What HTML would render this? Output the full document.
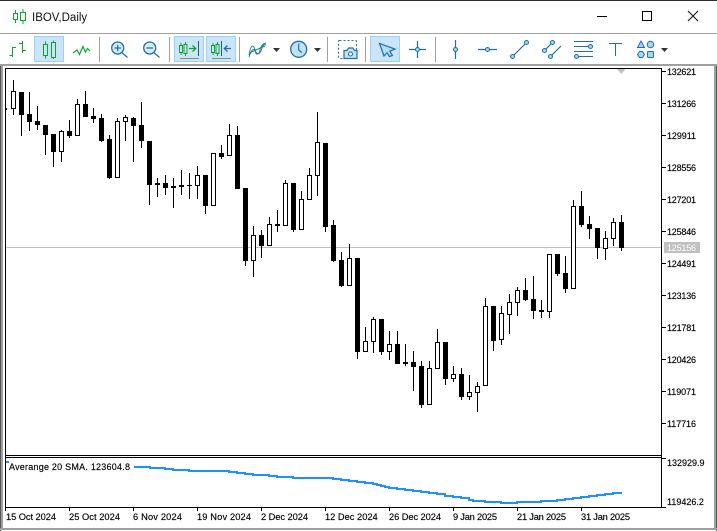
<!DOCTYPE html>
<html><head><meta charset="utf-8"><style>
html,body{margin:0;padding:0;width:717px;height:531px;overflow:hidden;background:#fff}
svg{display:block}
text{font-family:"Liberation Sans",sans-serif;font-size:9px;fill:#000;stroke:#000;stroke-width:.15px}
.d{font-size:9.3px}
.c{shape-rendering:crispEdges}
.ic{fill:none;stroke:#1f6fa8;stroke-width:1.2}
.nd{fill:#a9d4f2;stroke:#1f6fa8;stroke-width:1}
.g{fill:none;stroke:#0aa52a;stroke-width:1.2}
.sep{stroke:#a0a0a0;stroke-width:1;shape-rendering:crispEdges}
.btn{fill:#cce4f7;stroke:#99d1ff;stroke-width:1;shape-rendering:crispEdges}
</style></head><body>
<svg width="717" height="531" viewBox="0 0 717 531" xmlns="http://www.w3.org/2000/svg">
<rect width="717" height="531" fill="#fff"/>
<!-- chrome -->
<g class="c">
<rect x="0" y="0" width="717" height="1" fill="#2b2b2b"/>
<rect x="0" y="33" width="717" height="1" fill="#a0a0a0"/>
<rect x="0" y="64" width="717" height="2" fill="#a0a0a0"/>
<rect x="0" y="66" width="1" height="465" fill="#555"/>
<rect x="1" y="66" width="2" height="463" fill="#a0a0a0"/>
<rect x="714" y="66" width="2" height="463" fill="#a0a0a0"/>
<rect x="716" y="66" width="1" height="465" fill="#555"/>
<rect x="0" y="528" width="717" height="2" fill="#a0a0a0"/>
</g>
<!-- title -->
<path d="M15.5 10V23M23 9V24" stroke="#0aa52a" stroke-width="1.3" class="c"/>
<rect x="13.5" y="13.5" width="4" height="6" fill="#fff" stroke="#0aa52a" class="c"/>
<rect x="20.5" y="12.5" width="5" height="8" fill="#fff" stroke="#0aa52a" class="c"/>
<text x="32" y="21" style="font-size:11.5px;fill:#111;stroke:none">IBOV,Daily</text>
<!-- window controls -->
<path d="M597 16.5H607" stroke="#000" class="c"/>
<rect x="642.5" y="11.5" width="9" height="9" fill="none" stroke="#000" class="c"/>
<path d="M688 11L698 21M698 11L688 21" stroke="#111" stroke-width="1.1" fill="none"/>
<!-- toolbar -->
<g>
<path class="g c" d="M12.5 47V57M9.5 55.5H12.5M12.5 47.5H16M22.5 41V53M19 43.5H22.5M22.5 50.5H26"/>
<rect class="btn" x="34.5" y="36.5" width="29" height="25"/>
<path class="g c" d="M45.5 41.5V58.5M53.5 40.5V59"/>
<rect x="43.5" y="44.5" width="4" height="11" fill="#cce4f7" stroke="#0aa52a" class="c"/>
<rect x="51.5" y="42.5" width="4" height="15" fill="#cce4f7" stroke="#0aa52a" class="c"/>
<path class="g" d="M73 53L77 50L79.5 54.5L83 46.5L85.5 52L87.5 48.5L90 51"/>
<line class="sep" x1="99.5" y1="37" x2="99.5" y2="62"/>
<circle cx="117.7" cy="48" r="6" fill="#d6eafa" stroke="#1f6fa8" stroke-width="1.3"/>
<path class="ic" d="M121.8 52.5L127.5 57.5M114.5 48H121M117.7 44.8V51.2" stroke-width="1.4"/>
<circle cx="149.7" cy="48" r="6" fill="#d6eafa" stroke="#1f6fa8" stroke-width="1.3"/>
<path class="ic" d="M153.8 52.5L159.5 57.5M146.5 48H153"/>
<line class="sep" x1="169.5" y1="37" x2="169.5" y2="62"/>
<rect class="btn" x="174.5" y="36.5" width="29" height="25"/>
<path d="M181 43V55M185.5 42V56" stroke="#0aa52a" stroke-width="1.2" class="c"/>
<rect x="179.5" y="45.5" width="3" height="7" fill="#cce4f7" stroke="#0aa52a" class="c"/>
<rect x="184" y="44.5" width="3" height="9" fill="#cce4f7" stroke="#0aa52a" class="c"/>
<path d="M189 48.5H195.5M192.5 45.5L195.8 48.5L192.5 51.5" fill="none" stroke="#0aa52a" stroke-width="1.2"/>
<path d="M198.5 41V56" stroke="#1b5e93" stroke-width="1.2" class="c"/>
<path d="M180 58.5H199" stroke="#8a8a8a" class="c"/>
<rect class="btn" x="206.5" y="36.5" width="29" height="25"/>
<path d="M213 43V55M217.5 42V56" stroke="#0aa52a" stroke-width="1.2" class="c"/>
<rect x="211.5" y="45.5" width="3" height="7" fill="#cce4f7" stroke="#0aa52a" class="c"/>
<rect x="216" y="44.5" width="3" height="9" fill="#cce4f7" stroke="#0aa52a" class="c"/>
<path d="M221.5 41V56" stroke="#1b5e93" stroke-width="1.2" class="c"/>
<path d="M231 48.5H224.5M227.5 45.5L224.2 48.5L227.5 51.5" fill="none" stroke="#1f6fa8" stroke-width="1.2"/>
<path d="M212 58.5H231" stroke="#8a8a8a" class="c"/>
<line class="sep" x1="239.5" y1="37" x2="239.5" y2="62"/>
<path d="M249 55C251 43 254 45 255 50C256 56 259 55 260 50C261 45 264 43 266 43" fill="none" stroke="#1f6fa8" stroke-width=".9"/>
<path d="M249 57C252 48 254 48 256 52C258 56 261 52 262 48C263 45 264 44 266 45" fill="none" stroke="#1f6fa8" stroke-width=".9"/>
<path d="M249 53L265 46" stroke="#0aa52a" stroke-width="1.1"/>
<path d="M273 48H280L276.5 52Z" fill="#333"/>
<circle cx="298.7" cy="49.3" r="8" fill="#c3e1f7" stroke="#1f6fa8" stroke-width="1.3"/>
<path class="ic" d="M298.7 43.5V50L301.8 52.5"/>
<path d="M314 48H321L317.5 52Z" fill="#333"/>
<line class="sep" x1="327.5" y1="37" x2="327.5" y2="62"/>
<rect x="338.5" y="40.5" width="18" height="18" rx="1" fill="none" stroke="#1f6fa8" stroke-width="1.1" stroke-dasharray="2 2"/>
<path d="M344 50.5H347L348.5 48H353L354.5 50.5H357V58.5H344Z" fill="#c3e1f7" stroke="#1f6fa8" stroke-width="1.2"/>
<circle cx="350.5" cy="54" r="2" fill="#fff" stroke="#1f6fa8" stroke-width="1.1"/>
<line class="sep" x1="365.5" y1="37" x2="365.5" y2="62"/>
<rect class="btn" x="370.5" y="36.5" width="29" height="25"/>
<path d="M379.5 43.5L395 49L389.8 51.2L392.5 55.5L389.5 56.5L387 52.8L384 56Z" fill="#b5daf5" stroke="#1f6fa8" stroke-width="1.2"/>
<path class="ic" d="M409 49.5H426M417.5 41V58"/>
<circle class="nd" cx="417.5" cy="49.5" r="2"/>
<line class="sep" x1="435.5" y1="37" x2="435.5" y2="62"/>
<path class="ic" d="M455.5 40V59"/>
<circle class="nd" cx="455.5" cy="49.5" r="2"/>
<path class="ic" d="M478 49.5H497"/>
<circle class="nd" cx="487.5" cy="49.5" r="2"/>
<path class="ic" d="M512.5 56.5L526.5 42.5"/>
<circle class="nd" cx="512.5" cy="56.5" r="2"/>
<circle class="nd" cx="526.5" cy="42.5" r="2"/>
<path class="ic" d="M544.5 50.5L552.5 42.5M550.5 56.5L561 46"/>
<circle class="nd" cx="544.5" cy="50.5" r="2"/>
<circle class="nd" cx="552.5" cy="42.5" r="2"/>
<circle class="nd" cx="550.5" cy="56.5" r="2"/>
<path class="ic c" d="M574 41.5H593M574 46.5H588M574 51.5H593M578 56.5H593"/>
<circle class="nd" cx="590.5" cy="46.5" r="2"/>
<circle class="nd" cx="576.5" cy="56.5" r="2"/>
<path class="ic c" d="M609 43.5H622M615.5 43.5V56"/>
<path class="nd" d="M641 41L644.5 47.5H637.5Z"/>
<circle class="nd" cx="650.5" cy="44.5" r="3.3"/>
<path class="nd" d="M637.5 54.5L639.5 51.5H642.5L644.5 54.5L642.5 57.5H639.5Z"/>
<rect class="nd" x="647.5" y="51.5" width="6" height="6" rx="1"/>
<path d="M661 48H668L664.5 52Z" fill="#333"/>
</g>
<!-- price line -->
<rect class="c" x="6" y="247" width="655" height="1" fill="#c0c0c0"/>
<path d="M617 69H625.5L621.2 74Z" fill="#c0c0c0"/>
<!-- wicks -->
<path class="c" fill="none" stroke="#000" stroke-width="1" d="
M13.5 80V115M21.5 92V136M29.5 92V131M37.5 106V130M45.5 125V155M53.5 134V167M61.5 130V162M69.5 120V138M77.5 99V135M85.5 91V117M93.5 108V123M101.5 114V142M109.5 135V179M117.5 118V178M125.5 115V141M133.5 117V162M141.5 102V148M149.5 141V205M157.5 178V197M165.5 175V195
M173.5 178V208M181.5 170V195M189.5 173V199M197.5 166V199M205.5 175V214M213.5 153V206M221.5 145V159M229.5 124V156M237.5 126V189M245.5 188V266M253.5 226V277M261.5 230V258M269.5 217V246M277.5 210V232M285.5 180V226M293.5 183V232M301.5 191V230M309.5 168V199M317.5 112V196M325.5 143V232M333.5 220V262
M341.5 252V287M349.5 244V286M357.5 258V359M365.5 327V352M373.5 317V353M381.5 319V355M389.5 331V360M397.5 331V364M405.5 344V366M413.5 351V391M421.5 361V408M429.5 361V405M437.5 329V369M445.5 342V385M453.5 366V382M461.5 368V400M469.5 375V400M477.5 382V412M485.5 298V386M493.5 306V351M501.5 306V345M509.5 294V334
M517.5 287V316M525.5 278V301M533.5 276V319M541.5 300V318M549.5 254V318M557.5 254V276M565.5 256V293M573.5 200V289M581.5 191V227M589.5 216V239M597.5 228V259M605.5 231V260M613.5 218V246M621.5 215V251"/>
<!-- filled bodies -->
<path class="c" fill="#000" d="
M5 108h2v2h-2z
M19 92h5v23h-5zM27 114h5v8h-5zM35 121h5v4h-5zM43 125h5v10h-5zM51 134h5v18h-5zM67 131h5v5h-5zM83 104h5v13h-5zM91 116h5v3h-5zM99 118h5v23h-5zM107 139h5v39h-5zM131 118h5v8h-5zM139 125h5v16h-5zM147 141h5v44h-5zM155 183h5v2h-5zM163 183h5v5h-5z
M171 186h5v2h-5zM179 185h5v2h-5zM187 185h5v1h-5zM203 175h5v31h-5zM219 153h5v4h-5zM235 135h5v54h-5zM243 188h5v73h-5zM259 235h5v11h-5zM275 224h5v2h-5zM291 183h5v47h-5zM323 143h5v84h-5zM331 225h5v36h-5z
M339 260h5v26h-5zM355 258h5v94h-5zM379 319h5v33h-5zM395 344h5v20h-5zM403 362h5v2h-5zM411 362h5v5h-5zM419 366h5v39h-5zM443 342h5v37h-5zM459 374h5v23h-5zM491 306h5v35h-5z
M523 290h5v10h-5zM531 299h5v12h-5zM539 310h5v2h-5zM555 254h5v20h-5zM563 273h5v16h-5zM579 206h5v19h-5zM587 224h5v5h-5zM595 228h5v20h-5zM619 222h5v26h-5z"/>
<!-- hollow bodies -->
<path class="c" fill="#fff" stroke="#000" stroke-width="1" d="
M11.5 91.5h4v17h-4zM59.5 131.5h4v20h-4zM75.5 104.5h4v31h-4zM115.5 121.5h4v56h-4zM123.5 117.5h4v4h-4z
M195.5 175.5h4v10h-4zM211.5 153.5h4v52h-4zM227.5 135.5h4v20h-4zM251.5 235.5h4v25h-4zM267.5 224.5h4v21h-4zM283.5 183.5h4v42h-4zM299.5 199.5h4v30h-4zM307.5 175.5h4v24h-4zM315.5 142.5h4v33h-4z
M347.5 258.5h4v27h-4zM363.5 341.5h4v10h-4zM371.5 319.5h4v22h-4zM387.5 344.5h4v7h-4zM427.5 368.5h4v36h-4zM435.5 342.5h4v26h-4zM451.5 374.5h4v4h-4zM467.5 392.5h4v4h-4zM475.5 386.5h4v6h-4zM483.5 306.5h4v79h-4zM499.5 313.5h4v26h-4zM507.5 302.5h4v12h-4z
M515.5 290.5h4v12h-4zM547.5 254.5h4v57h-4zM571.5 206.5h4v82h-4zM603.5 238.5h4v10h-4zM611.5 222.5h4v16h-4z"/>
<!-- frames -->
<g class="c" fill="#000">
<rect x="5" y="68" width="657" height="1"/>
<rect x="5" y="455" width="657" height="1"/>
<rect x="5" y="457" width="657" height="1"/>
<rect x="5" y="507" width="657" height="1"/>
<rect x="5" y="68" width="1" height="443"/>
<rect x="661" y="68" width="1" height="440"/>
</g>
<!-- price ticks -->
<path class="c" stroke="#000" d="M662 71.5h4M662 103.5h4M662 135.5h4M662 167.5h4M662 199.5h4M662 231.5h4M662 263.5h4M662 295.5h4M662 327.5h4M662 359.5h4M662 391.5h4M662 423.5h4M662 458.5h4M662 507.5h4
M69.5 508v3M133.5 508v3M197.5 508v3M261.5 508v3M325.5 508v3M389.5 508v3M453.5 508v3M517.5 508v3M581.5 508v3"/>
<text x="667" y="75" textLength="29">132621</text>
<text x="667" y="107" textLength="29">131266</text>
<text x="667" y="139" textLength="29">129911</text>
<text x="667" y="171" textLength="29">128556</text>
<text x="667" y="203" textLength="29">127201</text>
<text x="667" y="235" textLength="29">125846</text>
<text x="667" y="267" textLength="29">124491</text>
<text x="667" y="299" textLength="29">123136</text>
<text x="667" y="331" textLength="29">121781</text>
<text x="667" y="363" textLength="29">120426</text>
<text x="667" y="395" textLength="29">119071</text>
<text x="667" y="427" textLength="29">117716</text>
<rect class="c" x="664" y="242" width="36" height="11" fill="#c0c0c0"/>
<text x="667" y="251" textLength="29" style="fill:#fff;stroke:none">125156</text>
<text x="667" y="466">132929.9</text>
<text x="667" y="505">119426.2</text>
<!-- SMA -->
<rect class="c" x="6" y="461" width="3" height="2" fill="#1e90ff"/>
<path class="c" fill="none" stroke="#1e90ff" stroke-width="2" d="M134 467H150V468H165V469H173V470H189V471H229V472H237V473H245V474H253V475H269V476H277V477H293V478H333V479H341V480H349V481H357V482H365V483H373V484H377V485H381V486H385V487H389V488H397V489H405V490H413V491H421V492H429V493H437V494H445V496H453V497H461V498H469V500H473V501H485V502H501V503H517V502H541V501H557V500H565V499H573V498H581V497H589V496H597V495H605V494H613V493H622"/>
<text x="9" y="470" textLength="121">Averange 20 SMA. 123604.8</text>
<!-- dates -->
<text class="d" x="6" y="520" textLength="50">15 Oct 2024</text>
<text class="d" x="69" y="520" textLength="51">25 Oct 2024</text>
<text class="d" x="133" y="520" textLength="49">6 Nov 2024</text>
<text class="d" x="197" y="520" textLength="54">19 Nov 2024</text>
<text class="d" x="261" y="520" textLength="47">2 Dec 2024</text>
<text class="d" x="325" y="520">12 Dec 2024</text>
<text class="d" x="389" y="520" textLength="52">26 Dec 2024</text>
<text class="d" x="453" y="520" textLength="44">9 Jan 2025</text>
<text class="d" x="517" y="520" textLength="49">21 Jan 2025</text>
<text class="d" x="581" y="520" textLength="49">31 Jan 2025</text>
</svg>
</body></html>
